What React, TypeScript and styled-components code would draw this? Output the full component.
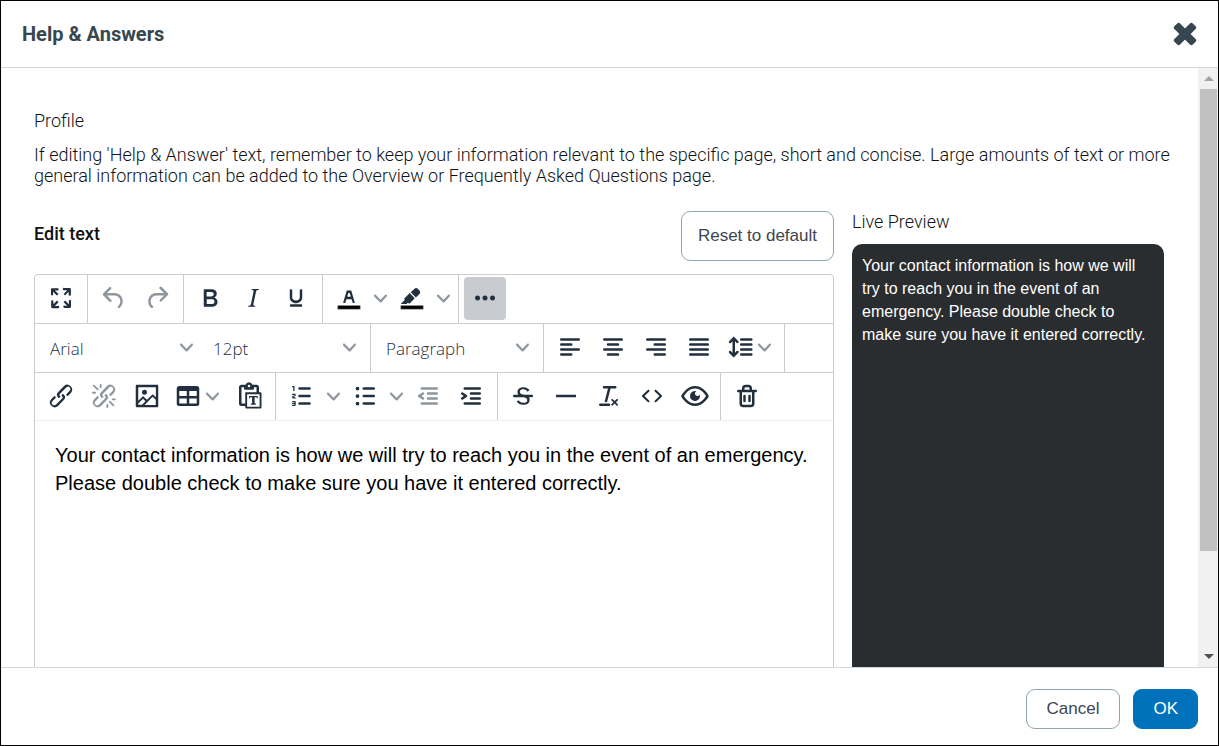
import React, { useState } from 'react';
import styled, { createGlobalStyle, css } from 'styled-components';

const GlobalStyle = createGlobalStyle`
  *, *::before, *::after { box-sizing: border-box; }
  html, body { margin: 0; padding: 0; background: #fff; }
  body { font-family: Roboto, "Liberation Sans", sans-serif; }
  button, select, textarea { font: inherit; margin: 0; }
`;

const ink = '#222f3e';
const line = '#cccccc';

const Dialog = styled.section`
  display: flex;
  flex-direction: column;
  height: 100vh;
  border: 1px solid #000;
  background: #fff;
`;

const Header = styled.header`
  display: flex;
  align-items: center;
  justify-content: space-between;
  height: 67px;
  flex: none;
  padding: 0 21px;
  border-bottom: 1px solid #cfd8dc;
`;

const Title = styled.h1`
  margin: 0;
  font-size: 20px;
  font-weight: 700;
  line-height: 24px;
  color: #37474f;
`;

const CloseButton = styled.button`
  display: flex;
  padding: 0;
  border: 0;
  background: none;
  color: #37474f;
  cursor: pointer;
`;

const Body = styled.div`
  display: flex;
  flex: 1;
  min-height: 0;
`;

const Content = styled.main`
  flex: 1;
  min-width: 0;
  overflow: hidden;
  padding: 42px 24px 0 33px;
`;

const Intro = styled.div`
  font-size: 18px;
  font-weight: 300;
  line-height: 21px;
  color: #101316;
`;

const IntroTitle = styled.h2`
  margin: 0 0 13px;
  font-size: inherit;
  font-weight: inherit;
`;

const IntroText = styled.p`
  margin: 0;
`;

const Columns = styled.div`
  display: grid;
  grid-template-columns: minmax(0, 1fr) 312px;
  column-gap: 18px;
  margin-top: 25px;
  margin-right: 10px;
`;

const EditorHead = styled.div`
  display: flex;
  align-items: flex-start;
  justify-content: space-between;
  margin-bottom: 13px;
`;

const EditLabel = styled.label`
  padding-top: 12px;
  font-size: 18px;
  font-weight: 500;
  line-height: 21px;
  color: #111;
`;

const ActionButton = styled.button<{ $primary?: boolean; $tall?: boolean }>`
  height: ${(p) => (p.$tall ? 50 : 40)}px;
  padding: 0 ${(p) => (p.$tall ? 16 : p.$primary ? 19 : 20)}px;
  border: 1px solid ${(p) => (p.$primary ? '#0072bc' : '#90a4ae')};
  border-radius: 9px;
  background: ${(p) => (p.$primary ? '#0072bc' : '#fff')};
  color: ${(p) => (p.$primary ? '#fff' : '#3c4650')};
  font-family: "Liberation Sans", Arial, sans-serif;
  font-size: 17px;
  cursor: pointer;
`;

const Editor = styled.div`
  border: 1px solid ${line};
  border-radius: 4px;
`;

const ToolRow = styled.div<{ $last?: boolean }>`
  display: flex;
  height: ${(p) => (p.$last ? 48 : 49)}px;
  border-bottom: 1px solid ${(p) => (p.$last ? '#eeeeee' : line)};
`;

const ToolGroup = styled.div<{ $open?: boolean; $tight?: boolean }>`
  display: flex;
  gap: 1px;
  padding: 0 ${(p) => (p.$tight ? 4 : 5)}px;
  ${(p) => !p.$open && css`border-right: 1px solid ${line};`}
`;

const ToolButton = styled.button<{ $active?: boolean; $off?: boolean; $menu?: boolean }>`
  display: flex;
  align-items: center;
  justify-content: ${(p) => (p.$menu ? 'flex-start' : 'center')};
  gap: 3px;
  width: ${(p) => (p.$menu ? 58 : 42)}px;
  height: 43px;
  margin: 2px 0 3px;
  padding: 0 ${(p) => (p.$menu ? 4 : 0)}px 1px;
  border: 0;
  border-radius: 4px;
  background: ${(p) => (p.$active ? '#c8cbcf' : 'transparent')};
  color: ${ink};
  cursor: pointer;
  & > svg { flex: none; }
  & > svg:first-child { opacity: ${(p) => (p.$off ? 0.5 : 1)}; }
`;

const Split = styled.div`
  display: flex;
`;

const SplitArrow = styled.button`
  display: flex;
  align-items: center;
  justify-content: center;
  width: 20px;
  height: 43px;
  margin: 2px 0 3px;
  padding: 0;
  border: 0;
  background: none;
  color: ${ink};
  cursor: pointer;
`;

const SelectBox = styled.div`
  display: grid;
  align-items: center;
  width: 162px;
  height: 43px;
  margin: 2px 0 3px;
  color: ${ink};
  & > * { grid-area: 1 / 1; }
  & > svg { justify-self: end; margin-right: 9px; pointer-events: none; }
`;

const SelectInput = styled.select`
  width: 100%;
  height: 43px;
  padding: 2px 30px 0 10px;
  border: 0;
  appearance: none;
  background: transparent;
  color: ${ink};
  font-family: "Open Sans", "Noto Sans", sans-serif;
  font-size: 17px;
  font-weight: 300;
`;

const TextArea = styled.textarea`
  display: block;
  width: 100%;
  height: 420px;
  padding: 20px;
  border: 0;
  outline: 0;
  resize: none;
  background: transparent;
  color: #000;
  font-family: "Liberation Sans", Arial, sans-serif;
  font-size: 20px;
  line-height: 28px;
`;

const PreviewTitle = styled.h2`
  margin: 0 0 12px;
  font-size: 18px;
  font-weight: 300;
  line-height: 21px;
  color: #101316;
`;

const PreviewCard = styled.div`
  min-height: 560px;
  padding: 10px;
  border-radius: 10px;
  background: #2a2d30;
  color: #fff;
  font-family: "Liberation Sans", Arial, sans-serif;
  font-size: 16px;
  line-height: 23px;
`;

const ScrollTrack = styled.div`
  display: flex;
  flex-direction: column;
  align-items: center;
  flex: none;
  width: 20px;
  padding-left: 1px;
  background: #f1f1f1;
`;

const ScrollArrow = styled.button`
  display: flex;
  align-items: center;
  justify-content: center;
  width: 100%;
  height: 21px;
  flex: none;
  padding: 0;
  border: 0;
  background: none;
`;

const ScrollLane = styled.div`
  flex: 1;
  width: 17px;
`;

const ScrollThumb = styled.div`
  height: 83%;
  background: #c1c1c1;
`;

const Footer = styled.footer`
  display: flex;
  align-items: center;
  justify-content: flex-end;
  gap: 13px;
  flex: none;
  height: 78px;
  padding: 4px 20px 0;
  border-top: 1px solid #cfd8dc;
`;

const paths: Record<string, string> = {
  fullscreen:
    'M15.3 10l-1.2-1.3 2.9-3h-2.3a.9.9 0 110-1.7H19c.5 0 .9.4.9.9v4.4a.9.9 0 11-1.8 0V7l-2.9 3zm0 4l3 3v-2.3a.9.9 0 111.7 0V19c0 .5-.4.9-.9.9h-4.4a.9.9 0 110-1.8H17l-3-2.9 1.3-1.2zM10 15.4l-2.9 3h2.3a.9.9 0 110 1.7H5a.9.9 0 01-.9-.9v-4.4a.9.9 0 111.8 0V17l2.9-3 1.2 1.3zM8.7 10L5.7 7v2.3a.9.9 0 01-1.7 0V5c0-.5.4-.9.9-.9h4.4a.9.9 0 010 1.8H7l3 2.9-1.3 1.2z',
  undo: 'M6.4 8H12c3.7 0 6.2 2 6.8 5.1.6 2.7-.4 5.6-2.3 6.8a1 1 0 01-1-1.8c1.1-.6 1.8-2.7 1.4-4.6-.5-2.1-2.1-3.5-4.9-3.5H6.4l3.3 3.3a1 1 0 11-1.4 1.4l-5-5a1 1 0 010-1.4l5-5a1 1 0 011.4 1.4L6.4 8z',
  redo: 'M17.6 10H12c-2.8 0-4.4 1.4-4.9 3.5-.4 2 .3 4 1.4 4.6a1 1 0 11-1 1.8c-2-1.2-2.9-4.1-2.3-6.8.6-3 3-5.1 6.8-5.1h5.6l-3.3-3.3a1 1 0 111.4-1.4l5 5a1 1 0 010 1.4l-5 5a1 1 0 01-1.4-1.4l3.3-3.3z',
  bold: 'M7.8 19c-.3 0-.5 0-.6-.2l-.2-.5V5.7c0-.2 0-.4.2-.5l.6-.2h5c1.5 0 2.7.3 3.5 1 .7.6 1.1 1.4 1.1 2.5a3 3 0 01-.6 1.9c-.4.6-1 1-1.6 1.2.4.1.9.3 1.3.6s.8.7 1 1.2c.4.4.5 1 .5 1.6 0 1.3-.4 2.3-1.3 3-.8.7-2.1 1-3.8 1H7.8zm5-8.3c.6 0 1.2-.1 1.6-.5.4-.3.6-.7.6-1.3 0-1.1-.8-1.7-2.3-1.7H9.3v3.5h3.4zm.5 6c.7 0 1.3-.1 1.7-.4.4-.4.6-.9.6-1.5s-.2-1-.7-1.4c-.4-.3-1-.4-2-.4H9.4v3.8h4z',
  italic:
    'M16.7 4.7l-.1.9h-.3c-.6 0-1 0-1.4.3-.3.3-.4.6-.5 1.1l-2.1 9.8v.6c0 .5.4.8 1.4.8h.2l-.2.8H8l.2-.8h.2c1.1 0 1.8-.5 2-1.5l2-9.8.1-.5c0-.6-.4-.8-1.4-.8h-.3l.2-.9h5.8z',
  underline:
    'M16 5c.6 0 1 .4 1 1v5.5a4 4 0 01-.4 1.8l-1 1.4a5.3 5.3 0 01-5.5 1 5 5 0 01-1.6-1c-.5-.4-.8-.9-1.1-1.4a4 4 0 01-.4-1.8V6c0-.6.4-1 1-1s1 .4 1 1v5.5c0 .3 0 .6.2 1l.6.7a3.3 3.3 0 002.2.8 3.4 3.4 0 002.2-.8c.3-.2.4-.5.6-.8l.2-.9V6c0-.6.4-1 1-1zM8 17h8c.6 0 1 .4 1 1s-.4 1-1 1H8a1 1 0 010-2z',
  foreColor:
    'M8.7 16h-.8a.5.5 0 01-.5-.6l2.7-9c.1-.3.3-.4.5-.4h2.8c.2 0 .4.1.5.4l2.7 9a.5.5 0 01-.5.6h-.8a.5.5 0 01-.4-.4l-.7-2.2c0-.3-.3-.4-.5-.4h-3.4c-.2 0-.4.1-.5.4l-.7 2.2c0 .3-.2.4-.4.4zm2.6-7.6l-.6 2a.5.5 0 00.5.6h1.6a.5.5 0 00.5-.6l-.6-2c0-.3-.3-.4-.5-.4h-.4c-.2 0-.4.1-.5.4z',
  highlight:
    'M7.7 16.7H3l3.3-3.3-.7-.8L10.2 8l4 4.1-4 4.2c-.2.2-.6.2-.8 0l-.6-.7-1.1 1.1zm5-7.5L11 7.4l3-2.9a2 2 0 012.6 0L18 6c.7.7.7 2 0 2.7l-2.9 2.9-1.8-1.8-.5-.6',
  more: 'M6 10a2 2 0 00-2 2c0 1.1.9 2 2 2a2 2 0 002-2 2 2 0 00-2-2zm12 0a2 2 0 00-2 2c0 1.1.9 2 2 2a2 2 0 002-2 2 2 0 00-2-2zm-6 0a2 2 0 00-2 2c0 1.1.9 2 2 2a2 2 0 002-2 2 2 0 00-2-2z',
  alignLeft:
    'M5 5h14a1 1 0 010 2H5a1 1 0 110-2zm0 4h8a1 1 0 010 2H5a1 1 0 110-2zm0 8h8a1 1 0 010 2H5a1 1 0 010-2zm0-4h14a1 1 0 010 2H5a1 1 0 010-2z',
  alignCenter:
    'M5 5h14a1 1 0 010 2H5a1 1 0 110-2zm3 4h8a1 1 0 010 2H8a1 1 0 110-2zm0 8h8a1 1 0 010 2H8a1 1 0 010-2zm-3-4h14a1 1 0 010 2H5a1 1 0 010-2z',
  alignRight:
    'M5 5h14a1 1 0 010 2H5a1 1 0 110-2zm6 4h8a1 1 0 010 2h-8a1 1 0 010-2zm0 8h8a1 1 0 010 2h-8a1 1 0 010-2zm-6-4h14a1 1 0 010 2H5a1 1 0 010-2z',
  justify:
    'M5 5h14a1 1 0 010 2H5a1 1 0 110-2zm0 4h14a1 1 0 010 2H5a1 1 0 110-2zm0 4h14a1 1 0 010 2H5a1 1 0 010-2zm0 4h14a1 1 0 010 2H5a1 1 0 010-2z',
  lineHeight:
    'M21 5a1 1 0 01.1 2H13a1 1 0 01-.1-2H21zm0 4a1 1 0 01.1 2H13a1 1 0 01-.1-2H21zm0 4a1 1 0 01.1 2H13a1 1 0 01-.1-2H21zm0 4a1 1 0 01.1 2H13a1 1 0 01-.1-2H21zM7 3.6l3.7 3.7a1 1 0 01-1.3 1.5h-.1L8 7.3v9.2l1.3-1.3a1 1 0 011.3 0h.1c.4.4.4 1 0 1.3v.1L7 20.4l-3.7-3.7a1 1 0 011.3-1.5h.1L6 16.7V7.4L4.7 8.7a1 1 0 01-1.3 0h-.1a1 1 0 010-1.3v-.1L7 3.6z',
  link: 'M6.2 12.3a1 1 0 011.4 1.4l-2.1 2a2 2 0 102.7 2.8l4.8-4.8a1 1 0 000-1.4 1 1 0 111.4-1.3 2.9 2.9 0 010 4L9.6 20a3.9 3.9 0 01-5.5-5.5l2-2zm11.6-.6a1 1 0 01-1.4-1.4l2-2a2 2 0 10-2.6-2.8L11 10.3a1 1 0 000 1.4A1 1 0 119.6 13a2.9 2.9 0 010-4L14.4 4a3.9 3.9 0 015.5 5.5l-2 2z',
  unlink:
    'M6.2 12.3a1 1 0 011.4 1.4l-2 2a2 2 0 102.6 2.8l4.8-4.8a1 1 0 000-1.4 1 1 0 111.4-1.3 2.9 2.9 0 010 4L9.6 20a3.9 3.9 0 01-5.5-5.5l2-2zm11.6-.6a1 1 0 01-1.4-1.4l2.1-2a2 2 0 10-2.7-2.8L11 10.3a1 1 0 000 1.4A1 1 0 119.6 13a2.9 2.9 0 010-4L14.4 4a3.9 3.9 0 015.5 5.5l-2 2zM7.6 6.3a.8.8 0 01-1 1.1L3.3 4.2a.7.7 0 111-1l3.2 3.1zM5.1 8.6a.8.8 0 010 1.5H3a.8.8 0 010-1.5H5zm5-3.5a.8.8 0 01-1.5 0V3a.8.8 0 011.5 0V5zm6 11.8a.8.8 0 011-1l3.2 3.2a.8.8 0 01-1 1L16 17zm-2.2 2a.8.8 0 011.5 0V21a.8.8 0 01-1.5 0V19zm5-3.5a.7.7 0 110-1.5H21a.8.8 0 010 1.5H19z',
  image:
    'M5 15.7l3.3-3.2c.3-.3.7-.3 1 0L12 15l4.1-4c.3-.4.8-.4 1 0l2 1.9V5H5v10.7zM5 18V19h3l2.8-2.9-2-2L5 17.9zm14-3l-2.5-2.4-6.4 6.5H19v-4zM4 3h16c.6 0 1 .4 1 1v16c0 .6-.4 1-1 1H4a1 1 0 01-1-1V4c0-.6.4-1 1-1zm6 8a2 2 0 100-4 2 2 0 000 4z',
  table:
    'M19 4a2 2 0 012 2v12a2 2 0 01-2 2H5a2 2 0 01-2-2V6c0-1.1.9-2 2-2h14zM5 14v4h6v-4H5zm14 0h-6v4h6v-4zm0-6h-6v4h6V8zM5 12h6V8H5v4z',
  pasteText:
    'M18 9V5h-2v1c0 .6-.4 1-1 1H9a1 1 0 01-1-1V5H6v13h3V9h9zM9 20H6a2 2 0 01-2-2V5c0-1.1.9-2 2-2h3.2A3 3 0 0112 1a3 3 0 012.8 2H18a2 2 0 012 2v4h1c.6 0 1 .4 1 1v11c0 .6-.4 1-1 1H10a1 1 0 01-1-1v-1zm1.5-9.5v10h10v-10h-10zM12 3a1 1 0 00-1 1c0 .5.4 1 1 1s1-.5 1-1-.4-1-1-1zm0 9h7v2h-.5c0-.6-.4-1-1-1h-1v4.5c0 .3.2.5.5.5h.5v1h-4v-1h.5c.3 0 .5-.2.5-.5V13h-1c-.6 0-1 .4-1 1H12v-2z',
  ordered:
    'M10 17h8c.6 0 1 .4 1 1s-.4 1-1 1h-8a1 1 0 010-2zm0-6h8c.6 0 1 .4 1 1s-.4 1-1 1h-8a1 1 0 010-2zm0-6h8c.6 0 1 .4 1 1s-.4 1-1 1h-8a1 1 0 110-2zM6 4v3.5c0 .3-.2.5-.5.5a.5.5 0 01-.5-.5V5h-.5a.5.5 0 010-1H6zm-1 8.8l.2.2h1.3c.3 0 .5.2.5.5s-.2.5-.5.5H4.9a1 1 0 01-.9-1V13c0-.4.3-.8.6-1l1.2-.4.2-.3a.2.2 0 00-.2-.2H4.5a.5.5 0 01-.5-.5c0-.3.2-.5.5-.5h1.6c.5 0 .9.4.9 1v.1c0 .4-.3.8-.6 1l-1.2.4-.2.3zM7 17v2c0 .6-.4 1-1 1H4.5a.5.5 0 010-1h1.2c.2 0 .3-.1.3-.3 0-.2-.1-.3-.3-.3H4.4a.4.4 0 110-.8h1.3c.2 0 .3-.1.3-.3 0-.2-.1-.3-.3-.3H4.5a.5.5 0 110-1H6c.6 0 1 .4 1 1z',
  unordered:
    'M11 5h8a1 1 0 010 2h-8a1 1 0 010-2zm0 6h8a1 1 0 010 2h-8a1 1 0 010-2zm0 6h8a1 1 0 010 2h-8a1 1 0 010-2zM6 4.5a1.5 1.5 0 110 3 1.5 1.5 0 010-3zm0 6a1.5 1.5 0 110 3 1.5 1.5 0 010-3zm0 6a1.5 1.5 0 110 3 1.5 1.5 0 010-3z',
  outdent:
    'M7 5h12a1 1 0 010 2H7a1 1 0 110-2zm5 4h7a1 1 0 010 2h-7a1 1 0 010-2zm0 4h7a1 1 0 010 2h-7a1 1 0 010-2zm-5 4h12a1 1 0 010 2H7a1 1 0 010-2zm1.6-3.8a1 1 0 01-1.2 1.6l-3-2a1 1 0 010-1.6l3-2a1 1 0 011.2 1.6L6.8 12l1.8 1.2z',
  indent:
    'M7 5h12a1 1 0 010 2H7a1 1 0 110-2zm5 4h7a1 1 0 010 2h-7a1 1 0 010-2zm0 4h7a1 1 0 010 2h-7a1 1 0 010-2zm-5 4h12a1 1 0 010 2H7a1 1 0 010-2zm-2.6-3.8L6.2 12l-1.8-1.2a1 1 0 011.2-1.6l3 2a1 1 0 010 1.6l-3 2a1 1 0 11-1.2-1.6z',
  strike:
    'M15.6 8.5c-.5-.7-1-1.1-1.3-1.3-.6-.4-1.3-.6-2-.6-2.7 0-2.8 1.7-2.8 2.1 0 1.6 1.8 2 3.2 2.3 4.4.9 4.6 2.8 4.6 3.9 0 1.4-.7 4.1-5 4.1A6.2 6.2 0 017 16.4l1.5-1.1c.4.6 1.6 2 3.7 2 1.6 0 2.5-.4 3-1.2.4-.8.3-2-.8-2.6-.7-.4-1.6-.7-2.9-1-1-.2-3.9-.8-3.9-3.6C7.6 6 10.3 5 12.4 5c2.9 0 4.2 1.6 4.7 2.4l-1.5 1.1z',
  removeFormat:
    'M13.2 6a1 1 0 010 .2l-2.6 10a1 1 0 01-1 .8h-.2a.8.8 0 01-.8-1l2.6-10H8a1 1 0 110-2h9a1 1 0 010 2h-3.8zM5 18h7a1 1 0 010 2H5a1 1 0 010-2zm13 1.5L16.5 18 15 19.5a.7.7 0 01-1-1l1.5-1.5-1.5-1.5a.7.7 0 011-1l1.5 1.5 1.5-1.5a.7.7 0 011 1L17.5 17l1.5 1.5a.7.7 0 01-1 1z',
  code: 'M9.8 15.7c.3.3.3.8 0 1-.3.4-.9.4-1.2 0l-4.4-4.1a.8.8 0 010-1.2l4.4-4.2c.3-.3.9-.3 1.2 0 .3.3.3.8 0 1.1L6 12l3.8 3.7zM14.2 15.7c-.3.3-.3.8 0 1 .4.4.9.4 1.2 0l4.4-4.1c.3-.3.3-.9 0-1.2l-4.4-4.2a.8.8 0 00-1.2 0c-.3.3-.3.8 0 1.1L18 12l-3.8 3.7z',
  preview:
    'M3.5 12.5c.5.8 1.1 1.6 1.8 2.3 2 2 4.2 3.2 6.7 3.2s4.7-1.2 6.7-3.2a16.2 16.2 0 002.1-2.8 15.7 15.7 0 00-2.1-2.8c-2-2-4.2-3.2-6.7-3.2a9.3 9.3 0 00-6.7 3.2A16.2 16.2 0 003.2 12c0 .2.2.3.3.5zm-2.4-1l.7-1.2L4 7.8C6.2 5.4 8.9 4 12 4c3 0 5.8 1.4 8.1 3.8a18.2 18.2 0 012.8 3.7v1l-.7 1.2-2.1 2.5c-2.3 2.4-5 3.8-8.1 3.8-3 0-5.8-1.4-8.1-3.8a18.2 18.2 0 01-2.8-3.7 1 1 0 010-1zm12-3.3a2 2 0 102.7 2.6 4 4 0 11-2.6-2.6z',
  trash:
    'M16 7h3a1 1 0 010 2h-1v9a3 3 0 01-3 3H9a3 3 0 01-3-3V9H5a1 1 0 110-2h3V6a3 3 0 013-3h2a3 3 0 013 3v1zm-2 0V6c0-.6-.4-1-1-1h-2a1 1 0 00-1 1v1h4zm2 2H8v9c0 .6.4 1 1 1h6c.6 0 1-.4 1-1V9zm-7 3a1 1 0 012 0v4a1 1 0 01-2 0v-4zm4 0a1 1 0 012 0v4a1 1 0 01-2 0v-4z',
};

function Icon({ name }: { name: string }) {
  return (
    <svg width="30" height="30" viewBox="0 0 24 24" fill="currentColor" fillRule="evenodd" aria-hidden="true">
      {(name === 'foreColor' || name === 'highlight') && (
        <path d="M3 18h18v3H3z" fill="#000" stroke="#9a9a9a" strokeWidth="0.4" />
      )}
      {name === 'rule' && <path d="M4 11h16v2H4z" />}
      {name === 'strike' && <path d="M5 11h14a1 1 0 010 2H5a1 1 0 010-2z" />}
      {paths[name] && <path d={paths[name]} />}
    </svg>
  );
}

function Chevron() {
  return (
    <svg width="13" height="13" viewBox="0 0 10 10" fill="currentColor" opacity="0.5" aria-hidden="true">
      <path d="M8.7 2.2c.3-.3.8-.3 1 0 .4.4.4.9 0 1.2L5.7 7.8c-.3.3-.9.3-1.2 0L.2 3.4a.8.8 0 010-1.2c.3-.3.8-.3 1.1 0L5 6l3.7-3.8z" />
    </svg>
  );
}

function Tool({ icon, label, off, active }: { icon: string; label: string; off?: boolean; active?: boolean }) {
  return (
    <ToolButton type="button" aria-label={label} title={label} $off={off} $active={active}>
      <Icon name={icon} />
    </ToolButton>
  );
}

function MenuTool({ icon, label }: { icon: string; label: string }) {
  return (
    <ToolButton type="button" aria-label={label} title={label} aria-haspopup="menu" $menu>
      <Icon name={icon} />
      <Chevron />
    </ToolButton>
  );
}

function SplitTool({ icon, label }: { icon: string; label: string }) {
  return (
    <Split>
      <Tool icon={icon} label={label} />
      <SplitArrow type="button" aria-label={`${label} options`}>
        <Chevron />
      </SplitArrow>
    </Split>
  );
}

function ToolSelect({ label, options }: { label: string; options: string[] }) {
  return (
    <SelectBox>
      <SelectInput aria-label={label} defaultValue={options[0]}>
        {options.map((o) => (
          <option key={o}>{o}</option>
        ))}
      </SelectInput>
      <Chevron />
    </SelectBox>
  );
}

const defaultText =
  'Your contact information is how we will try to reach you in the event of an emergency. Please double check to make sure you have it entered correctly.';

export default function App() {
  const [text, setText] = useState(defaultText);

  return (
    <>
      <GlobalStyle />
      <Dialog role="dialog" aria-labelledby="dialog-title">
        <Header>
          <Title id="dialog-title">Help &amp; Answers</Title>
          <CloseButton type="button" aria-label="Close">
            <svg width="24" height="24" viewBox="0 0 24 24" fill="currentColor" aria-hidden="true">
              <rect x="-1" y="8" width="26" height="8" rx="2" transform="rotate(45 12 12)" />
              <rect x="-1" y="8" width="26" height="8" rx="2" transform="rotate(-45 12 12)" />
            </svg>
          </CloseButton>
        </Header>

        <Body>
          <Content>
            <Intro>
              <IntroTitle>Profile</IntroTitle>
              <IntroText>
                If editing 'Help &amp; Answer' text, remember to keep your information relevant to the specific page,
                short and concise. Large amounts of text or more general information can be added to the Overview or
                Frequently Asked Questions page.
              </IntroText>
            </Intro>

            <Columns>
              <div>
                <EditorHead>
                  <EditLabel htmlFor="help-text">Edit text</EditLabel>
                  <ActionButton type="button" $tall onClick={() => setText(defaultText)}>
                    Reset to default
                  </ActionButton>
                </EditorHead>
                <Editor>
                  <ToolRow>
                    <ToolGroup>
                      <Tool icon="fullscreen" label="Fullscreen" />
                    </ToolGroup>
                    <ToolGroup>
                      <Tool icon="undo" label="Undo" off />
                      <Tool icon="redo" label="Redo" off />
                    </ToolGroup>
                    <ToolGroup>
                      <Tool icon="bold" label="Bold" />
                      <Tool icon="italic" label="Italic" />
                      <Tool icon="underline" label="Underline" />
                    </ToolGroup>
                    <ToolGroup>
                      <SplitTool icon="foreColor" label="Text color" />
                      <SplitTool icon="highlight" label="Background color" />
                    </ToolGroup>
                    <ToolGroup $open>
                      <Tool icon="more" label="More" active />
                    </ToolGroup>
                  </ToolRow>
                  <ToolRow>
                    <ToolGroup>
                      <ToolSelect label="Font" options={['Arial', 'Georgia', 'Verdana']} />
                      <ToolSelect label="Font size" options={['12pt', '14pt', '18pt']} />
                    </ToolGroup>
                    <ToolGroup>
                      <ToolSelect label="Block format" options={['Paragraph', 'Heading 1', 'Heading 2']} />
                    </ToolGroup>
                    <ToolGroup>
                      <Tool icon="alignLeft" label="Align left" />
                      <Tool icon="alignCenter" label="Align center" />
                      <Tool icon="alignRight" label="Align right" />
                      <Tool icon="justify" label="Justify" />
                      <MenuTool icon="lineHeight" label="Line height" />
                    </ToolGroup>
                  </ToolRow>
                  <ToolRow $last>
                    <ToolGroup>
                      <Tool icon="link" label="Insert link" />
                      <Tool icon="unlink" label="Remove link" off />
                      <Tool icon="image" label="Insert image" />
                      <MenuTool icon="table" label="Table" />
                      <Tool icon="pasteText" label="Paste as text" />
                    </ToolGroup>
                    <ToolGroup>
                      <SplitTool icon="ordered" label="Numbered list" />
                      <SplitTool icon="unordered" label="Bullet list" />
                      <Tool icon="outdent" label="Decrease indent" off />
                      <Tool icon="indent" label="Increase indent" />
                    </ToolGroup>
                    <ToolGroup $tight>
                      <Tool icon="strike" label="Strikethrough" />
                      <Tool icon="rule" label="Horizontal line" />
                      <Tool icon="removeFormat" label="Clear formatting" />
                      <Tool icon="code" label="Source code" />
                      <Tool icon="preview" label="Preview" />
                    </ToolGroup>
                    <ToolGroup $open>
                      <Tool icon="trash" label="Delete" />
                    </ToolGroup>
                  </ToolRow>
                  <TextArea
                    id="help-text"
                    value={text}
                    spellCheck={false}
                    onChange={(e) => setText(e.target.value)}
                  />
                </Editor>
              </div>

              <aside>
                <PreviewTitle>Live Preview</PreviewTitle>
                <PreviewCard>{text}</PreviewCard>
              </aside>
            </Columns>
          </Content>

          <ScrollTrack>
            <ScrollArrow type="button" aria-label="Scroll up">
              <svg width="10" height="5" viewBox="0 0 10 5" fill="#a3a3a3" aria-hidden="true">
                <path d="M0 5L5 0l5 5z" />
              </svg>
            </ScrollArrow>
            <ScrollLane>
              <ScrollThumb />
            </ScrollLane>
            <ScrollArrow type="button" aria-label="Scroll down">
              <svg width="10" height="5" viewBox="0 0 10 5" fill="#505050" aria-hidden="true">
                <path d="M0 0l5 5 5-5z" />
              </svg>
            </ScrollArrow>
          </ScrollTrack>
        </Body>

        <Footer>
          <ActionButton type="button">Cancel</ActionButton>
          <ActionButton type="button" $primary>
            OK
          </ActionButton>
        </Footer>
      </Dialog>
    </>
  );
}
